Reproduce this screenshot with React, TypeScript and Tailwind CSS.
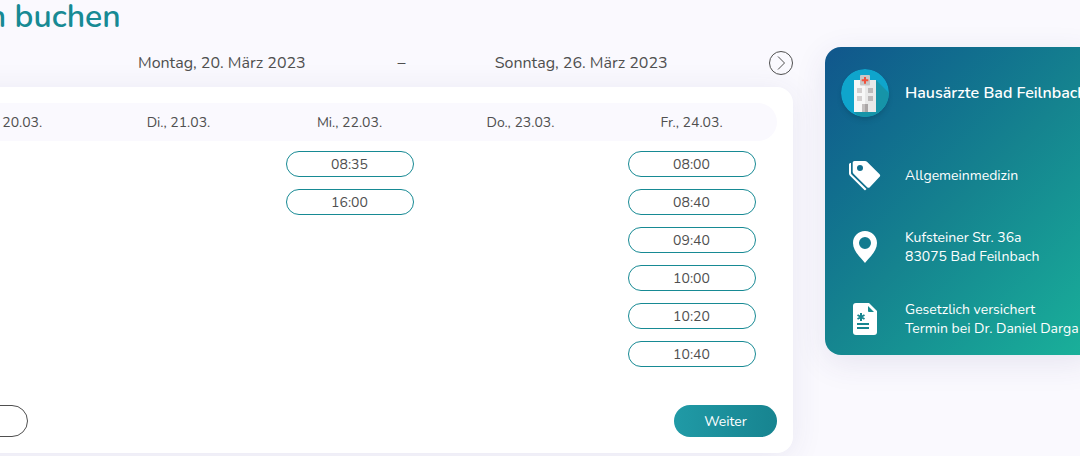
import type React from "react";

interface Day {
  label: string;
  slots: string[];
}

const days: Day[] = [
  { label: "Mo., 20.03.", slots: [] },
  { label: "Di., 21.03.", slots: [] },
  { label: "Mi., 22.03.", slots: ["08:35", "16:00"] },
  { label: "Do., 23.03.", slots: [] },
  { label: "Fr., 24.03.", slots: ["08:00", "08:40", "09:40", "10:00", "10:20", "10:40"] },
];

function HospitalAvatar() {
  return (
    <svg viewBox="0 0 48 48" className="size-12 rounded-full shadow-md" aria-hidden="true">
      <defs>
        <clipPath id="avatar">
          <circle cx="24" cy="24" r="24" />
        </clipPath>
      </defs>
      <g clipPath="url(#avatar)">
        <rect width="48" height="48" fill="#0fa5cc" />
        <path d="M35 11l13 13v24H18l-5-5z" fill="#1694a8" />
        <rect x="13" y="11" width="11" height="32" fill="#f7f7f7" />
        <rect x="24" y="11" width="11" height="32" fill="#e9e9e9" />
        <rect x="19" y="6" width="10" height="10.5" rx="1" fill="#c8c8c8" />
        <path d="M23 8h2v2.300h2.300v2H25v2.400h-2v-2.400h-2.300v-2H23z" fill="#f0523d" />
        <path d="M16 19h5v5h-5zM16 27h5v5h-5z" fill="#d3cfcf" />
        <path d="M27 19h5v5h-5zM27 27h5v5h-5z" fill="#bdbaba" />
        <path d="M21 35h3v8h-3z" fill="#c4c0c0" />
        <path d="M24 35h3v8h-3z" fill="#aaa6a6" />
      </g>
    </svg>
  );
}

function TagsIcon() {
  return (
    <svg viewBox="0 0 32 32" className="size-8" fill="currentColor" aria-hidden="true">
      <path
        fillRule="evenodd"
        d="M5.500 2H16c.8 0 1.400.2 2 .8l12.600 12.400c.8.8.8 1.800 0 2.600L20.800 28.200c-.8.8-1.800.8-2.600 0L4.500 14.700c-.5-.5-.8-1.100-.8-1.900V3.800C3.700 2.800 4.500 2 5.500 2zM11 6a3 3 0 100 6 3 3 0 000-6z"
      />
      <path d="M2 4v10c0 .6.2 1 .6 1.400L17.500 30l-1 1c-.4.300-.7.300-1.100 0L.8 16.600C.3 16 0 15.400 0 14.600V5.500C0 4.500.8 4 2 4z" />
    </svg>
  );
}

function PinIcon() {
  return (
    <svg viewBox="0 0 24 32" className="h-8 w-6" fill="currentColor" aria-hidden="true">
      <path
        fillRule="evenodd"
        d="M12 0C5.300 0 0 5.300 0 12c0 7.500 6 12.800 12 20 6-7.200 12-12.500 12-20C24 5.300 18.700 0 12 0zm0 6a6 6 0 110 12 6 6 0 010-12z"
      />
    </svg>
  );
}

function DocumentIcon() {
  return (
    <svg viewBox="0 0 24 32" className="h-8 w-6" aria-hidden="true">
      <path d="M3 0h13l8 8v21a3 3 0 01-3 3H3a3 3 0 01-3-3V3a3 3 0 013-3z" fill="currentColor" />
      <g stroke="#17858f" strokeWidth="2" fill="none">
        <path d="M8 10v8M4.500 12l7 4M11.500 12l-7 4" />
        <path d="M4 21h12M4 25h12" />
      </g>
      <path d="M15 3l6 6h-5a1 1 0 01-1-1z" fill="#178b90" />
    </svg>
  );
}

function InfoRow({ icon, children }: { icon: React.ReactNode; children: React.ReactNode }) {
  return (
    <li className="flex h-18 items-center gap-4">
      <span className="flex w-12 shrink-0 justify-center">{icon}</span>
      <span className="text-sm leading-[19px] whitespace-nowrap">{children}</span>
    </li>
  );
}

export default function App(): React.ReactNode {
  return (
    <div className="flex min-h-screen items-start gap-8 overflow-hidden bg-[#faf9fe] font-[Nunito,Lato,sans-serif] text-[#4f4f4f]">
      <main className="-ml-[94px] min-w-0 flex-1">
        <h1 className="h-[35px] text-[32px] leading-[34px] font-semibold text-[#178a94]">
          Termin buchen
        </h1>

        <div className="mt-4 flex h-6 items-center pl-32">
          <div className="grid flex-1 grid-cols-3 px-[98px] text-center text-base whitespace-nowrap">
            <span>Montag, 20. März 2023</span>
            <span>–</span>
            <span>Sonntag, 26. März 2023</span>
          </div>
          <button type="button" aria-label="Nächste Woche">
            <svg viewBox="0 0 24 24" className="size-6" fill="none" stroke="currentColor" aria-hidden="true">
              <circle cx="12" cy="12" r="11.5" />
              <path d="M9 5.500l6.500 6.500-6.500 6.500" />
            </svg>
          </button>
        </div>

        <section className="mt-3 rounded-2xl bg-white p-4 shadow-[0_4px_32px_rgba(60,50,120,0.09)]">
          <div className="grid grid-cols-5 rounded-full bg-[#faf9fe] pt-[10px] pb-2 text-center text-sm">
            {days.map((day) => (
              <span key={day.label}>{day.label}</span>
            ))}
          </div>

          <div className="grid grid-cols-5 pt-[10px]">
            {days.map((day) => (
              <div key={day.label} className="flex flex-col items-center gap-3">
                {day.slots.map((slot) => (
                  <button
                    key={slot}
                    type="button"
                    className="h-[26px] w-32 rounded-full border border-[#178a94] pt-[2px] text-sm"
                  >
                    {slot}
                  </button>
                ))}
              </div>
            ))}
          </div>

          <div className="mt-[38px] flex justify-between text-sm">
            <button type="button" aria-label="Zurück" className="h-8 w-[106px] rounded-full border border-[#4f4f4f]" />
            <button
              type="button"
              className="h-8 w-[103px] rounded-full bg-linear-to-r from-[#209aa6] to-[#178490] pt-[2px] text-white"
            >
              Weiter
            </button>
          </div>
        </section>
      </main>

      <aside className="mt-[47px] -mr-[15px] w-[270px] shrink-0 rounded-2xl bg-linear-135 from-[#11568c] via-[#15838f] to-[#1ab29a] px-4 text-white shadow-[0_8px_32px_rgba(60,50,120,0.1)]">
        <div className="flex h-[92px] items-center gap-4">
          <span className="shrink-0">
            <HospitalAvatar />
          </span>
          <h2 className="text-base font-semibold whitespace-nowrap">Hausärzte Bad Feilnbach</h2>
        </div>
        <ul>
          <InfoRow icon={<TagsIcon />}>Allgemeinmedizin</InfoRow>
          <InfoRow icon={<PinIcon />}>
            Kufsteiner Str. 36a
            <br />
            83075 Bad Feilnbach
          </InfoRow>
          <InfoRow icon={<DocumentIcon />}>
            Gesetzlich versichert
            <br />
            Termin bei Dr. Daniel Darga
          </InfoRow>
        </ul>
      </aside>
    </div>
  );
}
